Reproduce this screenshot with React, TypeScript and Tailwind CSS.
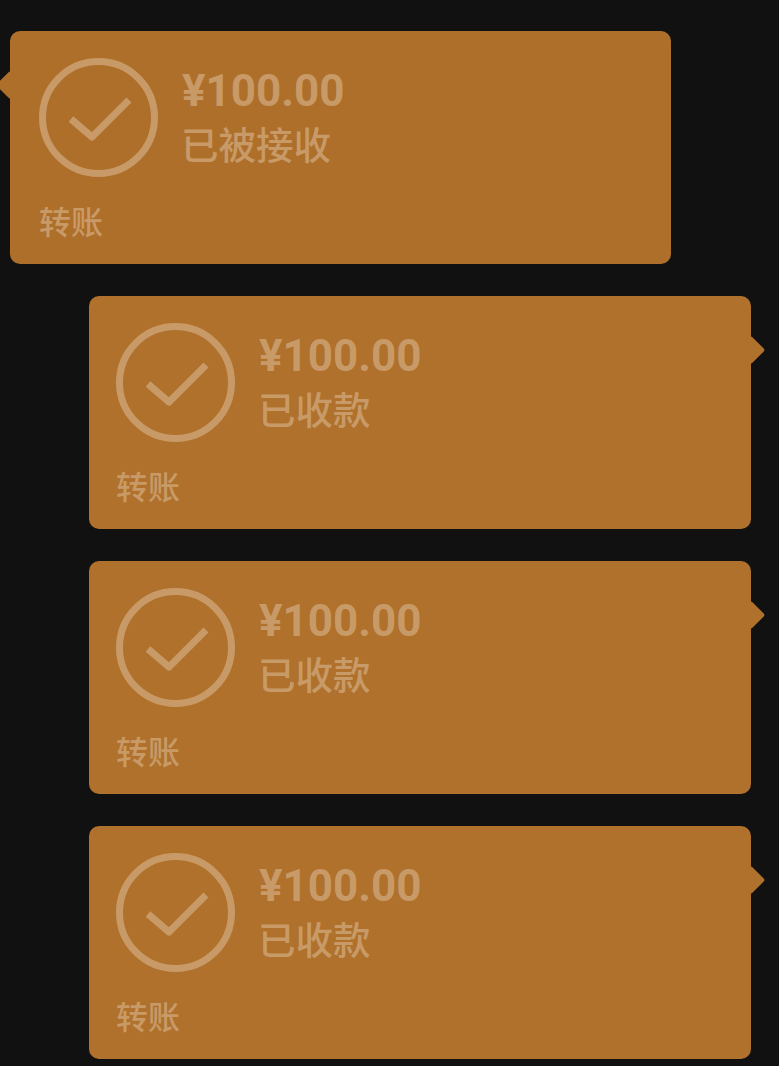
const FONT = "font-['Roboto','Noto_Sans_CJK_SC',sans-serif]"

function TransferCard({ status, side }: { status: string; side: 'left' | 'right' }) {
  const isLeft = side === 'left'
  return (
    <div className={`relative w-[661.5px] h-[233px] rounded-[10px] pt-[27px] ${isLeft ? 'bg-[#ad6f2a] ml-[9.5px] pl-[29.5px]' : 'bg-[#af712b] ml-[89px] pl-[27px]'}`}>
      <div className={`absolute top-[44px] w-[20px] h-[20px] rotate-45 rounded-[2px] ${isLeft ? 'bg-[#ad6f2a] left-[-10px]' : 'bg-[#af712b] right-[-10px]'}`} />
      <div className="flex">
        <svg width="119" height="119" viewBox="0 0 119 119" fill="none" stroke="#c89a68" strokeWidth="7" strokeLinejoin="round">
          <circle cx="59.5" cy="59.5" r="56" />
          <path d="M32 61 L53 79 L90 42" />
        </svg>
        <div className="ml-[24px] flex flex-col">
          <span className="text-[44px] leading-[56px] font-bold text-[#c89a68] mt-[5px]">¥100.00</span>
          <span className="text-[37.5px] leading-[44px] font-medium text-[#c89a68] mt-[5px] ml-[-1px]">{status}</span>
        </div>
      </div>
      <div className="text-[32px] leading-[40px] font-medium text-[#c89a68] mt-[26px]">转账</div>
    </div>
  )
}

export default function App() {
  return (
    <div className={`w-[779px] h-[1066px] bg-[#111111] overflow-hidden pt-[31px] flex flex-col gap-[32px] ${FONT}`}>
      <TransferCard status="已被接收" side="left" />
      <TransferCard status="已收款" side="right" />
      <TransferCard status="已收款" side="right" />
      <TransferCard status="已收款" side="right" />
    </div>
  )
}
